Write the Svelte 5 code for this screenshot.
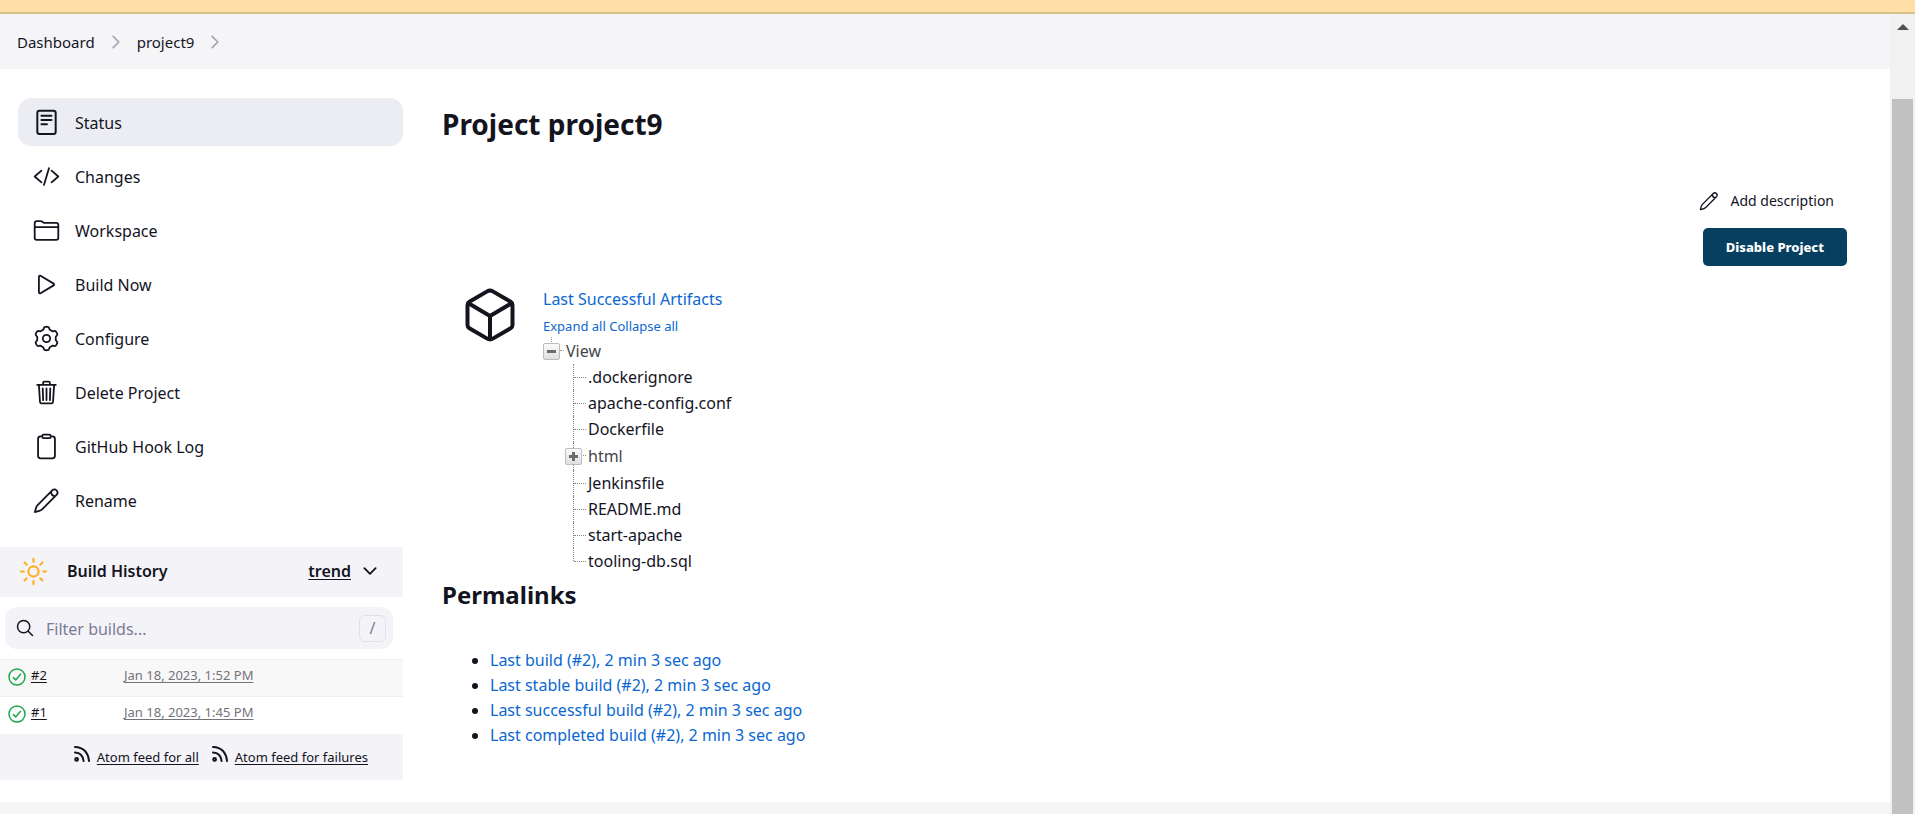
<script>
  const tau = Math.PI * 2;
  const gear =
    Array.from({ length: 96 }, (_, i) => {
      const a = (i / 96) * tau;
      const r = 199 + 24 * Math.tanh(-2.4 * Math.cos(6 * a));
      return `${i ? 'L' : 'M'}${(256 + r * Math.cos(a)).toFixed(1)} ${(256 + r * Math.sin(a)).toFixed(1)}`;
    }).join('') + 'Z';

  const pencil =
    'M36 476l22-82q8-30 30-52L364 66a57 57 0 0 1 82 82L172 424q-22 22-52 30zM340 92q8 76 80 82';

  const tasks = [
    { label: 'Status', active: true, d: 'M124 32h264a42 42 0 0 1 42 42v356a42 42 0 0 1-42 42H124a42 42 0 0 1-42-42V74a42 42 0 0 1 42-42zM160 128h190M160 208h190M160 288h104' },
    { label: 'Changes', d: 'M160 368L32 256l128-112M352 368l128-112-128-112M304 96l-96 320' },
    { label: 'Workspace', d: 'M440 432H72a40 40 0 01-40-40V120a40 40 0 0140-40h75.89a40 40 0 0122.19 6.72l27.84 18.56a40 40 0 0022.19 6.72H440a40 40 0 0140 40v240a40 40 0 01-40 40zM32 192h448' },
    { label: 'Build Now', d: 'M112 111v290c0 17.44 17 28.52 31 20.16l247.9-148.37c12.12-7.25 12.12-26.33 0-33.58L143 90.84c-14-8.36-31 2.72-31 20.16z' },
    { label: 'Configure', d: gear + 'M326 256a70 70 0 1 1-140 0a70 70 0 1 1 140 0z' },
    { label: 'Delete Project', d: 'M112 112l20 320c.95 18.49 14.4 32 32 32h184c17.67 0 30.87-13.51 32-32l20-320M80 112h352M192 112V72a24 24 0 0124-24h80a24 24 0 0124 24v40M256 176v224M184 176l8 224M328 176l-8 224' },
    { label: 'GitHub Hook Log', d: 'M336 64h32a48 48 0 0148 48v320a48 48 0 01-48 48H144a48 48 0 01-48-48V112a48 48 0 0148-48h32M202 32h108a26 26 0 0 1 26 26v12a26 26 0 0 1-26 26H202a26 26 0 0 1-26-26V58a26 26 0 0 1 26-26z' },
    { label: 'Rename', d: pencil },
  ];

  const builds = [
    { id: '#2', time: 'Jan 18, 2023, 1:52 PM' },
    { id: '#1', time: 'Jan 18, 2023, 1:45 PM' },
  ];

  const files = ['.dockerignore', 'apache-config.conf', 'Dockerfile', 'html', 'Jenkinsfile', 'README.md', 'start-apache', 'tooling-db.sql'];

  const permalinks = ['Last build', 'Last stable build', 'Last successful build', 'Last completed build'];
  const feeds = ['Atom feed for all', 'Atom feed for failures'];
</script>

{#snippet icon(d, cls)}
  <svg class="icon {cls}" viewBox="0 0 512 512" aria-hidden="true"><path {d} /></svg>
{/snippet}

<div class="window">
  <div class="banner"></div>
  <div class="viewport">
    <div class="page">
      <nav class="crumbs" aria-label="Breadcrumb">
        <a href="#dashboard">Dashboard</a>
        {@render icon('M184 112l144 144-144 144', 'crumb-arrow')}
        <a href="#project9">project9</a>
        {@render icon('M184 112l144 144-144 144', 'crumb-arrow')}
      </nav>

      <div class="body">
        <aside>
          <nav class="tasks" aria-label="Project">
            {#each tasks as task}
              <a href="#task" class:active={task.active}>
                {@render icon(task.d, 'task-icon')}
                <span>{task.label}</span>
              </a>
            {/each}
          </nav>

          <section class="history">
            <header>
              <svg class="icon sun" viewBox="0 0 512 512" aria-hidden="true">
                <path d="M256 48v48M256 416v48M403 109l-34 34M143 369l-34 34M464 256h-48M96 256H48M403 403l-34-34M143 143l-34-34" />
                <circle cx="256" cy="256" r="84" />
              </svg>
              <h2>Build History</h2>
              <a href="#trend">trend</a>
              <button class="collapse" aria-label="Collapse">{@render icon('M112 184l144 144 144-144', 'chevron')}</button>
            </header>

            <label class="filter">
              {@render icon('M221 64a157 157 0 1 0 157 157A157 157 0 0 0 221 64zM338 338L448 448', 'search')}
              <input type="search" placeholder="Filter builds..." aria-label="Filter builds" />
              <kbd>/</kbd>
            </label>

            <table>
              <tbody>
                {#each builds as build}
                  <tr>
                    <td class="number">
                      <div>
                        <svg class="icon ok" viewBox="0 0 18 18" aria-hidden="true">
                          <circle cx="9" cy="9" r="8" />
                          <path d="M5.4 9.6l2.3 2.3 4.8-5.6" />
                        </svg>
                        <a href="#build">{build.id}</a>
                      </div>
                    </td>
                    <td class="time"><a href="#build">{build.time}</a></td>
                  </tr>
                {/each}
              </tbody>
            </table>

            <footer>
              {#each feeds as feed}
                <a href="#feed">
                  <svg class="icon rss" viewBox="0 0 16 16" aria-hidden="true">
                    <circle cx="2.6" cy="13.4" r="1.4" />
                    <path d="M1 6.4Q8.600 6.600 9.600 15M1 1Q13.600 1.600 15 15" />
                  </svg>
                  <span>{feed}</span>
                </a>
              {/each}
            </footer>
          </section>
        </aside>

        <main>
          <h1>Project project9</h1>

          <div class="actions">
            <a href="#description" class="describe">{@render icon(pencil, 'edit')}<span>Add description</span></a>
            <button class="disable">Disable Project</button>
          </div>

          <section class="artifacts">
            {@render icon('M448 341.37V170.61A32 32 0 00432.11 143l-152-88.46a47.94 47.94 0 00-48.24 0L79.89 143A32 32 0 0064 170.61v170.76A32 32 0 0079.89 369l152 88.46a48 48 0 0048.24 0l152-88.46A32 32 0 00448 341.37zM69 154l187 110 187-110M256 463.99V264', 'cube')}
            <div>
              <a class="title" href="#artifacts">Last Successful Artifacts</a>
              <div class="expand"><a href="#expand">Expand all</a> <a href="#collapse">Collapse all</a></div>
              <div class="root">
                <button class="toggle" aria-label="Collapse View"></button>
                <span>View</span>
              </div>
              <ul class="tree">
                {#each files as file}
                  {#if file === 'html'}
                    <li class="folder"><button class="toggle closed" aria-label="Expand html"></button><span>{file}</span></li>
                  {:else}
                    <li><a href="#file">{file}</a></li>
                  {/if}
                {/each}
              </ul>
            </div>
          </section>

          <h2 class="section">Permalinks</h2>
          <ul class="permalinks">
            {#each permalinks as link}
              <li><a href="#permalink">{link} (#2), 2 min 3 sec ago</a></li>
            {/each}
          </ul>
        </main>
      </div>
      <div class="page-footer"></div>
    </div>
    <div class="scrollbar" aria-hidden="true">
      <svg viewBox="0 0 12 6"><path d="M0 6L6 0l6 6z" /></svg>
      <div class="thumb"></div>
    </div>
  </div>
</div>

<style>
  :global(body) {
    margin: 0;
    background: #fff;
  }
  .window {
    display: flex;
    flex-direction: column;
    min-height: 100vh;
    font-family: 'Noto Sans', 'Open Sans', sans-serif;
    font-size: 16px;
    line-height: 24px;
    color: #14141f;
  }
  .window :global(*) {
    box-sizing: border-box;
  }
  a {
    color: inherit;
    text-decoration: none;
  }
  button,
  input {
    font: inherit;
    color: inherit;
    border: 0;
    padding: 0;
    background: none;
  }
  h1,
  h2,
  ul {
    margin: 0;
    padding: 0;
  }
  .icon {
    flex: none;
    display: block;
    fill: none;
    stroke: currentColor;
    stroke-width: 32;
    stroke-linecap: round;
    stroke-linejoin: round;
  }
  .banner {
    height: 14px;
    background: #ffdfa5;
    border-bottom: 2px solid #d9c08f;
  }
  .viewport {
    flex: 1;
    display: flex;
  }
  .page {
    flex: 1;
    display: flex;
    flex-direction: column;
  }
  .crumbs {
    display: flex;
    align-items: center;
    gap: 11px;
    height: 55px;
    padding: 0 17px;
    background: #f5f5f8;
    font-size: 15px;
  }
  .crumb-arrow {
    width: 20px;
    height: 20px;
    stroke-width: 44;
    color: #a5a5b6;
  }
  .body {
    display: flex;
  }
  .page-footer {
    flex: 1;
    background: #f5f5f8;
  }

  aside {
    width: 403px;
    flex: none;
    padding: 29px 0 22px;
  }
  .tasks {
    display: flex;
    flex-direction: column;
    gap: 6px;
    padding-left: 18px;
  }
  .tasks a {
    display: flex;
    align-items: center;
    gap: 15px;
    height: 48px;
    padding: 0 15px;
    border-radius: 13px;
  }
  .tasks a.active {
    background: #ecedf3;
  }
  .tasks span {
    padding-top: 1px;
  }
  .task-icon {
    width: 27px;
    height: 27px;
    stroke-width: 34;
  }
  .active .task-icon {
    stroke-width: 38;
  }
  .history {
    margin-top: 23px;
  }
  .history header {
    display: flex;
    align-items: center;
    height: 50px;
    padding: 0 23px 2px 18px;
    background: #f3f3f8;
  }
  .sun {
    width: 31px;
    height: 31px;
    color: #feb020;
    stroke-width: 36;
  }
  .history h2 {
    flex: 1;
    margin-left: 18px;
    font-size: 16px;
    font-weight: 600;
  }
  .history header a {
    font-weight: 600;
    text-decoration: underline;
    text-underline-offset: 2px;
  }
  .collapse {
    margin-left: 9px;
  }
  .chevron {
    width: 20px;
    height: 20px;
    stroke-width: 48;
  }
  .filter {
    display: flex;
    align-items: center;
    gap: 11px;
    height: 42px;
    margin: 10px 10px 10px 5px;
    padding: 0 7px 0 10px;
    background: #f3f3f8;
    border-radius: 12px;
  }
  .search {
    width: 20px;
    height: 20px;
    stroke-width: 38;
  }
  .filter input {
    flex: 1;
    min-width: 0;
    padding-top: 2px;
    outline: none;
  }
  .filter input::placeholder {
    color: #7b7b95;
    opacity: 1;
  }
  kbd {
    width: 27px;
    height: 27px;
    border: 1px solid #e0e0e8;
    border-radius: 6px;
    font: inherit;
    line-height: 25px;
    text-align: center;
    color: #7b7b95;
  }
  table {
    width: 100%;
    border-collapse: collapse;
    font-size: 13px;
    line-height: 20px;
  }
  tr {
    border-top: 1px solid #f0f0f4;
  }
  tr:first-child {
    background: #f8f8f8;
  }
  td {
    height: 37px;
    padding: 0 0 6px;
  }
  td a {
    text-decoration: underline;
    text-underline-offset: 2px;
  }
  .number {
    width: 124px;
    padding-left: 8px;
  }
  .number div {
    display: flex;
    align-items: center;
    gap: 5px;
  }
  .ok {
    width: 18px;
    height: 18px;
    stroke-width: 1.5;
    color: #1ea64b;
    margin-top: 4px;
  }
  .time {
    color: #73737a;
  }
  .history footer {
    display: flex;
    align-items: center;
    justify-content: flex-end;
    gap: 13px;
    height: 46px;
    padding-right: 35px;
    background: #f3f3f8;
    font-size: 13px;
    line-height: 20px;
  }
  .history footer a {
    display: flex;
    align-items: center;
    gap: 7px;
  }
  .history footer span {
    text-decoration: underline;
    text-underline-offset: 2px;
  }
  .rss {
    width: 16px;
    height: 16px;
    stroke-width: 2;
    margin-bottom: 5px;
  }

  main {
    flex: 1;
    padding: 35px 43px 0 39px;
  }
  h1 {
    font-size: 28px;
    line-height: 40px;
    font-weight: 700;
  }
  .actions {
    display: flex;
    flex-direction: column;
    align-items: flex-end;
    gap: 15px;
    margin-top: 45px;
  }
  .describe {
    display: flex;
    align-items: center;
    gap: 11px;
    margin-right: 13px;
    font-size: 14px;
  }
  .edit {
    width: 20px;
    height: 20px;
    stroke-width: 34;
  }
  .disable {
    height: 38px;
    padding: 0 23px;
    border-radius: 5px;
    background: #073f61;
    color: #fff;
    font-size: 13px;
    font-weight: 800;
  }
  .artifacts {
    display: flex;
    gap: 23px;
    margin-top: 21px;
    padding-left: 18px;
  }
  .cube {
    width: 60px;
    height: 60px;
    margin-top: -2px;
    stroke-width: 34;
  }
  .title,
  .expand,
  .permalinks a {
    color: #0b67d0;
  }
  .title {
    display: block;
  }
  .expand {
    margin-top: 3px;
    font-size: 13px;
  }
  .root {
    position: relative;
    display: flex;
    align-items: center;
    gap: 6px;
    height: 26px;
    color: #45454d;
  }
  .root::before {
    content: '';
    position: absolute;
    left: 8px;
    top: -1px;
    height: 5px;
    border-left: 1px dotted #999;
  }
  .toggle {
    flex: none;
    width: 17px;
    height: 17px;
    border: 1px solid #bcbcbc;
    border-radius: 2px;
    background:
      linear-gradient(#6c6c6c, #6c6c6c) center / 9px 3px no-repeat,
      linear-gradient(#fafafa, #e0e0e0);
  }
  .toggle.closed {
    background:
      linear-gradient(#6c6c6c, #6c6c6c) center / 9px 3px no-repeat,
      linear-gradient(#6c6c6c, #6c6c6c) center / 3px 9px no-repeat,
      linear-gradient(#fafafa, #e0e0e0);
  }
  .root::after {
    content: '';
    position: absolute;
    left: 17px;
    top: 12px;
    width: 4px;
    border-top: 1px dotted #999;
  }
  .tree {
    list-style: none;
    padding-left: 30px;
  }
  .tree li {
    position: relative;
    display: flex;
    align-items: center;
    height: 26px;
    padding-left: 15px;
  }
  .tree li::before {
    content: '';
    position: absolute;
    left: 0;
    top: 0;
    bottom: 0;
    border-left: 1px dotted #888;
  }
  .tree li:last-child::before {
    bottom: 13px;
  }
  .tree li::after {
    content: '';
    position: absolute;
    left: 1px;
    top: 13px;
    width: 12px;
    border-top: 1px dotted #888;
  }
  .tree .folder {
    height: 28px;
    color: #45454d;
  }
  .folder .toggle {
    position: absolute;
    left: -8px;
    z-index: 1;
  }
  .section {
    margin-top: 3px;
    font-size: 24px;
    line-height: 36px;
    font-weight: 700;
  }
  .permalinks {
    margin-top: 35px;
    padding-left: 48px;
    line-height: 25px;
  }

  .scrollbar {
    flex: none;
    width: 25px;
    display: flex;
    flex-direction: column;
    padding: 10px 2px 0;
    background: #f1f1f1;
  }
  .scrollbar svg {
    width: 12px;
    height: 6px;
    margin: 0 auto;
    fill: #505050;
  }
  .thumb {
    flex: 1;
    margin-top: 69px;
    background: #c1c1c1;
  }
</style>
